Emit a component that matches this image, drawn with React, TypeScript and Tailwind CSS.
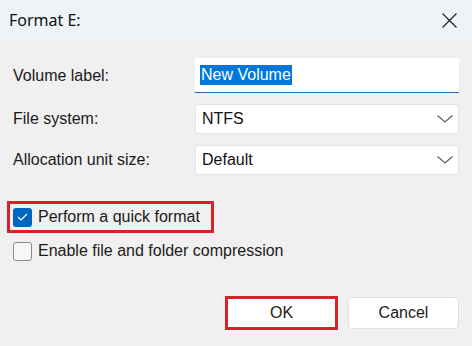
function Chevron() {
  return (
    <svg width="16" height="8" viewBox="0 0 16 8" fill="none" className="shrink-0">
      <polyline points="0.5,0.5 8,7 15.5,0.5" stroke="#606060" strokeWidth="1.2" />
    </svg>
  )
}

function Select({ value }: { value: string }) {
  return (
    <div className="flex h-[30px] w-[264px] items-center justify-between rounded-[3px] border border-[#e3e3e3] bg-white pl-[6px] pr-[5px] text-[16px] text-[#111]">
      <span>{value}</span>
      <Chevron />
    </div>
  )
}

export default function App() {
  return (
    <div
      className="flex h-[346px] w-[472px] flex-col overflow-hidden bg-[#f0f0f0] text-[#1a1a1a]"
      style={{ fontFamily: '"Liberation Sans", Arial, sans-serif' }}
    >
      <div className="flex h-[40px] shrink-0 items-center justify-between bg-[#eef3f7] pl-[9px] pr-[15px]">
        <span className="text-[16px] text-[#111]" style={{ fontFamily: '"Noto Sans", sans-serif' }}>Format E:</span>
        <svg width="15" height="15" viewBox="0 0 15 15" fill="none">
          <path d="M0.5 0.5 L14.5 14.5 M14.5 0.5 L0.5 14.5" stroke="#1a1a1a" strokeWidth="1.1" />
        </svg>
      </div>

      <div className="flex flex-col gap-[11px] pt-[18px] pl-[13px]">
        <div className="flex items-center">
          <span className="w-[182px] text-[16px]">Volume label:</span>
          <div className="flex h-[35px] w-[264px] items-center border-b-[1.5px] border-[#1f6fb8] bg-white pl-[5px]">
            <span className="bg-[#0078d7] px-[1px] text-[16px] leading-[20px] text-white">New Volume</span>
          </div>
        </div>
        <div className="flex items-center">
          <span className="w-[182px] text-[16px]">File system:</span>
          <Select value="NTFS" />
        </div>
        <div className="flex items-center">
          <span className="w-[182px] text-[16px]">Allocation unit size:</span>
          <Select value="Default" />
        </div>
      </div>

      <div className="mt-[26px] flex flex-col pl-[7px]">
        <div className="flex h-[32px] w-[207px] items-center border-[3px] border-[#d8212b] pl-[3px]">
          <div className="flex h-[19px] w-[19px] items-center justify-center rounded-[3px] bg-[#0067c0]">
            <svg width="11" height="8" viewBox="0 0 11 8" fill="none">
              <polyline points="1,4 4,7 10,1" stroke="white" strokeWidth="1.2" />
            </svg>
          </div>
          <span className="ml-[6px] text-[16px]">Perform a quick format</span>
        </div>
        <div className="mt-[6px] flex items-center pl-[6px]">
          <div className="h-[19px] w-[19px] rounded-[3px] border border-[#8a8a8a] bg-[#f7f7f7]" />
          <span className="ml-[6px] text-[16px]">Enable file and folder compression</span>
        </div>
      </div>

      <div className="mt-auto mb-[16px] flex items-center justify-end gap-[10px] pr-[13px]">
        <div className="flex h-[34px] w-[113px] items-center justify-center border-[3px] border-[#d8212b] bg-white text-[16px]">
          OK
        </div>
        <div className="flex h-[32px] w-[111px] items-center justify-center rounded-[4px] border border-[#e0e0e0] bg-white text-[16px]">
          Cancel
        </div>
      </div>
    </div>
  )
}
